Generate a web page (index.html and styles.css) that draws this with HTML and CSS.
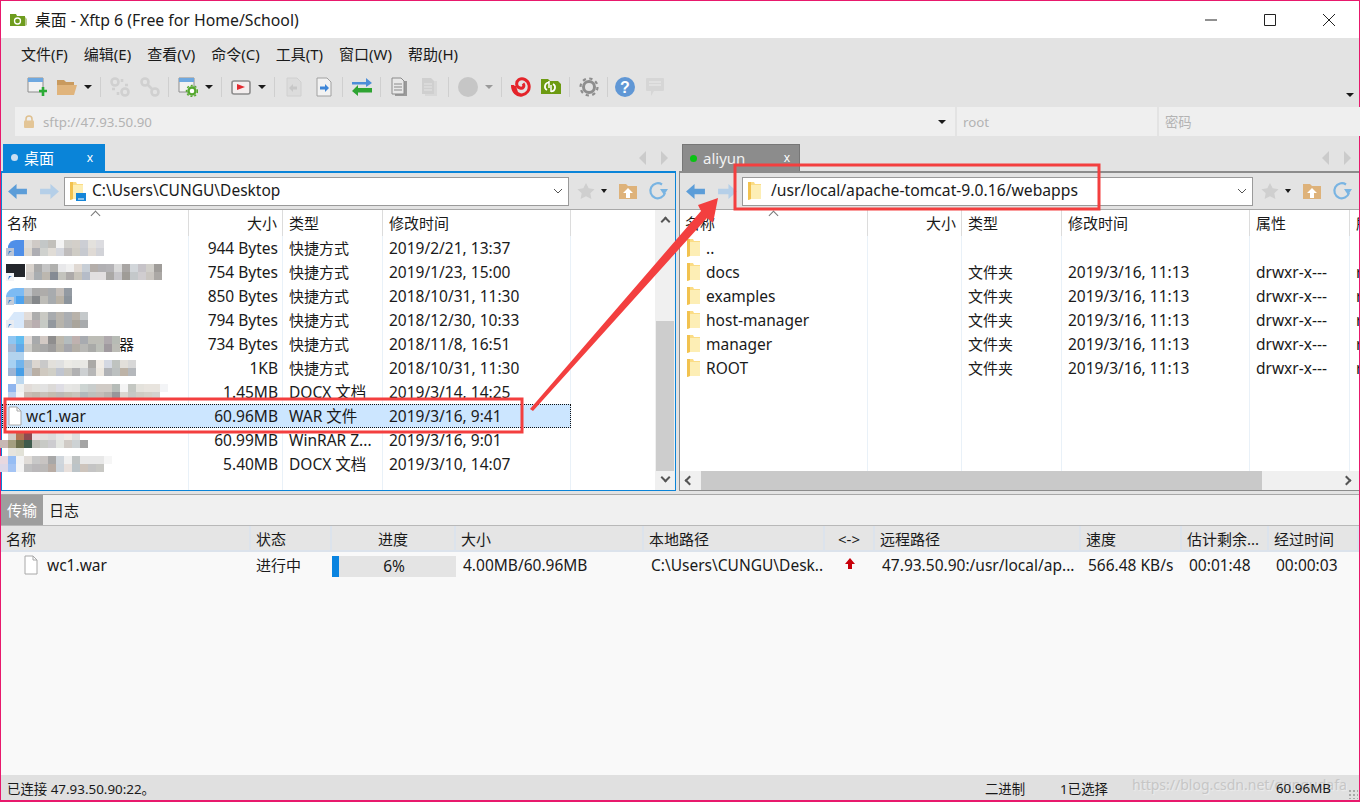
FILE: index.html
```html
<!DOCTYPE html>
<html lang="zh-CN">
<head>
  <meta charset="UTF-8">
  <title>桌面 - Xftp 6 (Free for Home/School)</title>
  <link rel="stylesheet" href="styles.css">
</head>
<body>

  <!-- icones reutilizados -->
  <svg class="defs" width="0" height="0">
    <symbol id="i-folder" viewBox="0 0 13 20">
      <path d="M0 1h6l1 2h6v15H3l-3 1z" fill="#fbdc85"/>
      <path d="M3 4h10v14H3z" fill="#fdeeb5"/>
      <path d="M0 1h3v17l-3 1z" fill="#f2c24f"/>
    </symbol>
    <symbol id="i-back" viewBox="0 0 20 18">
      <path d="M0 9l9-8v5h11v6H9v5z"/>
    </symbol>
    <symbol id="i-fwd" viewBox="0 0 20 18">
      <path d="M20 9l-9-8v5H0v6h11v5z"/>
    </symbol>
    <symbol id="i-star" viewBox="0 0 20 20">
      <path d="M10 1l3 6 6.500 1-4.700 4.500 1.200 6.500-6-3.200L4 19l1.200-6.500L.5 8 7 7z" fill="#cfcfcf"/>
    </symbol>
    <symbol id="i-home" viewBox="0 0 20 20">
      <path d="M1 3h7l2 2h9v13H1z" fill="#deb27a"/>
      <path d="M10 7l5 5h-3v5H8v-5H5z" fill="#fff"/>
    </symbol>
    <symbol id="i-refresh" viewBox="0 0 20 20">
      <path d="M17 12a7.500 7.500 0 1 1-3-8.500" fill="none" stroke="#79b4e2" stroke-width="2.200"/>
      <path d="M12 8h8l-4 6z" fill="#79b4e2"/>
    </symbol>
    <symbol id="i-file" viewBox="0 0 14 20">
      <path d="M1 1h8l4 4v14H1z" fill="#fff" stroke="#a8a8a8"/>
      <path d="M9 1v4h4" fill="none" stroke="#a8a8a8"/>
    </symbol>
    <symbol id="i-doc" viewBox="0 0 20 20">
      <path d="M3 1h10l4 4v14H3z" fill="#dcdcdc" stroke="#d0d0d0"/>
    </symbol>
  </svg>

  <div class="window">

    <header class="titlebar">
      <svg class="app-icon" width="17" height="14" viewBox="0 0 17 14">
        <path d="M0 1h6l1 2h8v10H0z" fill="#6e9c1e"/>
        <path d="M15 4l2 2v6l-2 1z" fill="#b9c98e"/>
        <circle cx="7.500" cy="8" r="3" fill="none" stroke="#fff" stroke-width="1.300"/>
      </svg>
      <span class="title-text">桌面 - Xftp 6 (Free for Home/School)</span>
      <div class="win-buttons">
        <svg width="14" height="14" viewBox="0 0 14 14"><path d="M1 7h12" stroke="#222"/></svg>
        <svg width="14" height="14" viewBox="0 0 14 14"><path d="M1.500 1.500h11v11h-11z" fill="none" stroke="#222"/></svg>
        <svg width="14" height="14" viewBox="0 0 14 14"><path d="M1 1l12 12M13 1L1 13" stroke="#222"/></svg>
      </div>
    </header>

    <nav class="menubar">
      <span>文件(F)</span>
      <span>编辑(E)</span>
      <span>查看(V)</span>
      <span>命令(C)</span>
      <span>工具(T)</span>
      <span>窗口(W)</span>
      <span>帮助(H)</span>
    </nav>

    <div class="toolbar">
      <svg class="tool" viewBox="0 0 20 20">
        <path d="M1 1h15v14H1z" fill="#f2f2f2" stroke="#8d8d8d"/><path d="M1 1h15v4H1z" fill="#6ea8e0"/>
        <path d="M12 14h8M16 10v9" stroke="#2bab35" stroke-width="2.600"/>
      </svg>
      <svg class="tool" viewBox="0 0 20 20">
        <path d="M0 3h7l2 2h8v3H0z" fill="#c99a5e"/><path d="M0 8h20l-3 10H0z" fill="#e0b47c"/>
      </svg>
      <i class="drop"></i>
      <i class="sep"></i>
      <svg class="tool" viewBox="0 0 20 20" fill="none" stroke="#d0d0d0" stroke-width="2.600">
        <circle cx="5" cy="5" r="3.500"/><circle cx="15" cy="15" r="3.500"/><path d="M12 2v3M18 8h-3M2 12h3M8 18v-3"/>
      </svg>
      <svg class="tool" viewBox="0 0 20 20" fill="none" stroke="#d0d0d0" stroke-width="2.600">
        <circle cx="5" cy="5" r="3.500"/><circle cx="15" cy="15" r="3.500"/><path d="M7 7l6 6"/>
      </svg>
      <i class="sep"></i>
      <svg class="tool" viewBox="0 0 20 20">
        <path d="M1 1h15v14H1z" fill="#f2f2f2" stroke="#8d8d8d"/><path d="M1 1h15v4H1z" fill="#6ea8e0"/>
        <circle cx="14" cy="14" r="3.500" fill="#fff" stroke="#55a82e" stroke-width="2.400"/>
        <circle cx="14" cy="14" r="5.500" fill="none" stroke="#55a82e" stroke-width="1.500" stroke-dasharray="2 2"/>
      </svg>
      <i class="drop"></i>
      <i class="sep"></i>
      <svg class="tool" viewBox="0 0 20 20">
        <rect x="1" y="4" width="18" height="13" rx="2" fill="#f3eeee" stroke="#8d8d8d" stroke-width="1.600"/>
        <path d="M6 7l8 3-8 3z" fill="#e2282e"/>
      </svg>
      <i class="drop"></i>
      <i class="sep"></i>
      <svg class="tool" viewBox="0 0 20 20">
        <use href="#i-doc"/><path d="M5 11l4-4v2.500h4v3H9V15z" fill="#c8c8c8"/>
      </svg>
      <svg class="tool" viewBox="0 0 20 20">
        <path d="M3 1h10l4 4v14H3z" fill="#f2f2f2" stroke="#a0a0a0"/><path d="M15 11l-4-4v2.500H6v3h5V15z" fill="#3d85d8"/>
      </svg>
      <i class="sep"></i>
      <svg class="tool" viewBox="0 0 20 20">
        <path d="M0 5h14V1l6 5-6 4V7.500H0z" fill="#4d8ed8"/><path d="M20 11H6V8l-6 6 6 5v-3.500h14z" fill="#2ea432"/>
      </svg>
      <i class="sep"></i>
      <svg class="tool" viewBox="0 0 20 20">
        <path d="M5 4h12v15H5z" fill="#9a9a9a"/><path d="M2 1h9l3 3v13H2z" fill="#e8e8e8" stroke="#8a8a8a"/>
        <path d="M4 7h8M4 10h8M4 13h8" stroke="#8a8a8a"/>
      </svg>
      <svg class="tool" viewBox="0 0 20 20">
        <path d="M5 4h12v15H5z" fill="#d8d8d8"/><path d="M2 1h9l3 3v13H2z" fill="#cfcfcf"/>
        <path d="M4 7h8M4 10h8M4 13h8" stroke="#e4e4e4"/>
      </svg>
      <i class="sep"></i>
      <svg class="tool" viewBox="0 0 20 20"><circle cx="10" cy="10" r="10" fill="#c6c6c6"/></svg>
      <i class="drop drop-gray"></i>
      <i class="sep"></i>
      <svg class="tool" viewBox="0 0 20 20">
        <path d="M1.500 8C1.500 15 6 19 11 18C16 17 19 13 18 8C17 3 12 0.500 8 2.500C4.500 5 5 10 9 11C12 12 14 9 12 6.500" fill="none" stroke="#e4242a" stroke-width="3"/>
        <path d="M0 8l5 1 2 6 4 2-3 2-5-3z" fill="#e4242a"/>
      </svg>
      <svg class="tool" viewBox="0 0 20 20">
        <path d="M0 2h7l2 2h8l3 3v10H0z" fill="#6d9b12"/>
        <path d="M6 13a4 4 0 0 1 2-7.500M12 7a4 4 0 0 1-2 7.500" fill="none" stroke="#fff" stroke-width="1.700"/>
        <path d="M8 4v7M10 8v7" stroke="#fff" stroke-width="1.500"/>
      </svg>
      <i class="sep"></i>
      <svg class="tool" viewBox="0 0 20 20">
        <circle cx="10" cy="10" r="5.500" fill="none" stroke="#8e8e8e" stroke-width="3"/>
        <circle cx="10" cy="10" r="8.500" fill="none" stroke="#8e8e8e" stroke-width="2.200" stroke-dasharray="3.300 3.370"/>
      </svg>
      <i class="sep"></i>
      <svg class="tool tight" viewBox="0 0 20 20">
        <circle cx="10" cy="10" r="10" fill="#6097d5"/>
        <text x="10" y="15.500" class="help-mark">?</text>
      </svg>
      <svg class="tool" viewBox="0 0 20 20">
        <path d="M2 1h16a1 1 0 0 1 1 1v11a1 1 0 0 1-1 1H9l-3 5v-5H2a1 1 0 0 1-1-1V2a1 1 0 0 1 1-1z" fill="#d6d6d6"/>
        <path d="M4 5h12M4 8h12" stroke="#ececec"/>
      </svg>
      <i class="drop toolbar-more"></i>
    </div>

    <div class="addressbar">
      <div class="addr addr-host">
        <svg width="10" height="13" viewBox="0 0 10 13"><path d="M2 6V4a3 3 0 0 1 6 0v2" fill="none" stroke="#dfc08f" stroke-width="1.500"/><rect y="5.500" width="10" height="7.500" rx="1" fill="#e3c596"/></svg>
        <span>sftp://47.93.50.90</span>
        <i class="drop drop-host"></i>
      </div>
      <div class="addr addr-user">root</div>
      <div class="addr addr-pass">密码</div>
    </div>

    <div class="tabrow">
      <div class="tabside tabside-left">
        <div class="tab tab-active"><i class="dot dot-white"></i><b>桌面</b><em>x</em></div>
        <div class="tab-arrows"><i class="tri-l"></i><i class="tri-r"></i></div>
      </div>
      <div class="tabside tabside-right">
        <div class="tab tab-gray"><i class="dot dot-green"></i><span>aliyun</span><em>x</em></div>
        <div class="tab-arrows"><i class="tri-l"></i><i class="tri-r"></i></div>
      </div>
    </div>

    <main class="panes">

      <!-- painel local -->
      <section class="pane pane-local">
        <div class="pathbar">
          <svg class="nav-arrow nav-back"><use href="#i-back"/></svg>
          <svg class="nav-arrow nav-fwd"><use href="#i-fwd"/></svg>
          <div class="pathbox">
            <svg class="path-folder" width="13" height="20"><use href="#i-folder"/></svg>
            <svg class="path-badge" width="10" height="8" viewBox="0 0 10 8"><path d="M0 0h10v8H0z" fill="#1585d8"/><path d="M2 6h6" stroke="#fff"/></svg>
            <span>C:\Users\CUNGU\Desktop</span>
            <svg class="chev" width="10" height="6" viewBox="0 0 10 6"><path d="M1 1l4 4 4-4" fill="none" stroke="#555"/></svg>
          </div>
          <svg class="pt-star" width="18" height="18"><use href="#i-star"/></svg>
          <i class="drop"></i>
          <svg class="pt-home" width="20" height="20"><use href="#i-home"/></svg>
          <svg class="pt-refresh" width="20" height="20"><use href="#i-refresh"/></svg>
        </div>
        <div class="pane-body">
          <div class="listing">
            <div class="row head cols-local">
              <span>名称</span><span class="num">大小</span><span>类型</span><span>修改时间</span>
            </div>
            <i class="sort-caret"></i>
            <div class="rows rows-local">
              <div class="row cols-local"><span></span><span class="num">944 Bytes</span><span class="zh">快捷方式</span><span>2019/2/21, 13:37</span></div>
              <div class="row cols-local"><span></span><span class="num">754 Bytes</span><span class="zh">快捷方式</span><span>2019/1/23, 15:00</span></div>
              <div class="row cols-local"><span></span><span class="num">850 Bytes</span><span class="zh">快捷方式</span><span>2018/10/31, 11:30</span></div>
              <div class="row cols-local"><span></span><span class="num">794 Bytes</span><span class="zh">快捷方式</span><span>2018/12/30, 10:33</span></div>
              <div class="row cols-local"><span class="name-tail">器</span><span class="num">734 Bytes</span><span class="zh">快捷方式</span><span>2018/11/8, 16:51</span></div>
              <div class="row cols-local"><span></span><span class="num">1KB</span><span class="zh">快捷方式</span><span>2018/10/31, 11:30</span></div>
              <div class="row cols-local"><span></span><span class="num">1.45MB</span><span>DOCX 文档</span><span>2019/3/14, 14:25</span></div>
              <div class="row cols-local row-selected"><span class="name"><svg width="14" height="20"><use href="#i-file"/></svg>wc1.war</span><span class="num">60.96MB</span><span>WAR 文件</span><span>2019/3/16, 9:41</span></div>
              <div class="row cols-local"><span></span><span class="num">60.99MB</span><span>WinRAR Z...</span><span>2019/3/16, 9:01</span></div>
              <div class="row cols-local"><span></span><span class="num">5.40MB</span><span>DOCX 文档</span><span>2019/3/10, 14:07</span></div>
            </div>
          </div>
          <div class="vscroll">
            <i class="arrow-up"></i>
            <div class="vtrack"><div class="vthumb"></div></div>
            <i class="arrow-down"></i>
          </div>
        </div>
      </section>

      <!-- painel remoto -->
      <section class="pane pane-remote">
        <div class="pathbar">
          <svg class="nav-arrow nav-back"><use href="#i-back"/></svg>
          <svg class="nav-arrow nav-fwd"><use href="#i-fwd"/></svg>
          <div class="pathbox">
            <svg class="path-folder" width="13" height="20"><use href="#i-folder"/></svg>
            <span>/usr/local/apache-tomcat-9.0.16/webapps</span>
            <svg class="chev" width="10" height="6" viewBox="0 0 10 6"><path d="M1 1l4 4 4-4" fill="none" stroke="#555"/></svg>
          </div>
          <svg class="pt-star" width="18" height="18"><use href="#i-star"/></svg>
          <i class="drop"></i>
          <svg class="pt-home" width="20" height="20"><use href="#i-home"/></svg>
          <svg class="pt-refresh" width="20" height="20"><use href="#i-refresh"/></svg>
        </div>
        <div class="listing listing-remote">
          <div class="row head cols-remote">
            <span>名称</span><span class="num">大小</span><span>类型</span><span>修改时间</span><span>属性</span><span>所有者</span>
          </div>
          <i class="sort-caret"></i>
          <div class="rows rows-remote">
            <div class="row cols-remote"><span class="name"><svg width="13" height="20"><use href="#i-folder"/></svg>..</span><span></span><span></span><span></span><span></span><span></span></div>
            <div class="row cols-remote"><span class="name"><svg width="13" height="20"><use href="#i-folder"/></svg>docs</span><span></span><span class="zh">文件夹</span><span>2019/3/16, 11:13</span><span>drwxr-x---</span><span>root</span></div>
            <div class="row cols-remote"><span class="name"><svg width="13" height="20"><use href="#i-folder"/></svg>examples</span><span></span><span class="zh">文件夹</span><span>2019/3/16, 11:13</span><span>drwxr-x---</span><span>root</span></div>
            <div class="row cols-remote"><span class="name"><svg width="13" height="20"><use href="#i-folder"/></svg>host-manager</span><span></span><span class="zh">文件夹</span><span>2019/3/16, 11:13</span><span>drwxr-x---</span><span>root</span></div>
            <div class="row cols-remote"><span class="name"><svg width="13" height="20"><use href="#i-folder"/></svg>manager</span><span></span><span class="zh">文件夹</span><span>2019/3/16, 11:13</span><span>drwxr-x---</span><span>root</span></div>
            <div class="row cols-remote"><span class="name"><svg width="13" height="20"><use href="#i-folder"/></svg>ROOT</span><span></span><span class="zh">文件夹</span><span>2019/3/16, 11:13</span><span>drwxr-x---</span><span>root</span></div>
          </div>
        </div>
        <div class="hscroll">
          <i class="arrow-left"></i>
          <div class="htrack"><div class="hthumb"></div></div>
          <i class="arrow-right"></i>
        </div>
      </section>
    </main>

    <section class="transfers">
      <div class="transfer-tabs">
        <span class="ttab ttab-active">传输</span>
        <span class="ttab">日志</span>
      </div>
      <div class="tgrid thead">
        <span>名称</span><span>状态</span><span class="center">进度</span><span>大小</span><span>本地路径</span><span class="center">&lt;-&gt;</span><span>远程路径</span><span>速度</span><span>估计剩余...</span><span>经过时间</span>
      </div>
      <div class="tbody">
        <div class="tgrid trow">
          <span class="tname"><svg width="14" height="20"><use href="#i-file"/></svg>wc1.war</span>
          <span class="zh">进行中</span>
          <span class="progress"><i class="progress-fill"></i><b>6%</b></span>
          <span>4.00MB/60.96MB</span>
          <span>C:\Users\CUNGU\Desk..</span>
          <span class="center"><svg class="up-mark" width="12" height="12" viewBox="0 0 12 12"><path d="M6 0l5 6H8v5H4V6H1z" fill="#c8000a"/></svg></span>
          <span>47.93.50.90:/usr/local/ap...</span>
          <span>566.48 KB/s</span>
          <span>00:01:48</span>
          <span>00:00:03</span>
        </div>
      </div>
    </section>

    <footer class="statusbar">
      <span class="st-conn">已连接 47.93.50.90:22。</span>
      <span class="st-mode">二进制</span>
      <span class="st-sel">1已选择</span>
      <span class="st-size">60.96MB</span>
      <span class="grip"></span>
    </footer>
  </div>

  <!-- mosaico dos nomes e marcacoes vermelhas, por cima da janela -->
  <svg class="overlay" width="1360" height="802" viewBox="0 0 1360 802">
    <g class="mosaic">
      <!-- linha 1 -->
      <path d="M8 246q2-6 8-6h8v16H8z" fill="#4f8fe8"/>
      <rect x="6" y="248" fill="#b9c4d6"/><path d="M8 255l1-4h3l-2 1z" fill="#2f78c8"/>
      <rect x="24" y="240" fill="#dedcd9"/><rect x="32" y="240" fill="#cfcac6"/><rect x="40" y="240" fill="#c3c7c7"/><rect x="48" y="240" fill="#c2c0bb"/><rect x="56" y="240" fill="#f3f3f3"/><rect x="64" y="240" fill="#d0cfcb"/><rect x="72" y="240" fill="#d3cfc9"/><rect x="80" y="240" fill="#ccced4"/><rect x="88" y="240" fill="#e3e1dd"/><rect x="96" y="240" fill="#dcdce0"/>
      <rect x="24" y="248" fill="#dcd7cf"/><rect x="32" y="248" fill="#aeaeb3"/><rect x="40" y="248" fill="#cfd1ce"/><rect x="48" y="248" fill="#e0dcd6"/><rect x="56" y="248" fill="#d5d7dd"/><rect x="64" y="248" fill="#bfbcbc"/><rect x="72" y="248" fill="#cfccc5"/><rect x="80" y="248" fill="#c7cad0"/><rect x="88" y="248" fill="#dfdad5"/><rect x="96" y="248" fill="#d2d3d8"/>
      <!-- linha 2 -->
      <path d="M6 264h19v13H6z" fill="#23262b"/>
      <rect x="6" y="273" fill="#f2f4f8"/><path d="M8 280l1-4h3l-2 1z" fill="#2f78c8"/>
      <rect x="26" y="264" fill="#d8d2cc"/><rect x="34" y="264" fill="#a9a9a9"/><rect x="42" y="264" fill="#c4c4c4"/><rect x="50" y="264" fill="#b0b0ae"/><rect x="58" y="264" fill="#e8e8ea"/><rect x="66" y="264" fill="#f0f0f0"/><rect x="74" y="264" fill="#e0d9d3"/><rect x="82" y="264" fill="#c7ced6"/><rect x="90" y="264" fill="#b4aeaa"/><rect x="98" y="264" fill="#b1b0b3"/><rect x="106" y="264" fill="#b4b3b6"/><rect x="114" y="264" fill="#d9d9d9"/><rect x="122" y="264" fill="#a9a6a4"/><rect x="130" y="264" fill="#d2d6da"/><rect x="138" y="264" fill="#c6c3c8"/><rect x="146" y="264" fill="#d1cfca"/><rect x="154" y="264" fill="#9f9c99"/>
      <rect x="26" y="272" fill="#cfcac6"/><rect x="34" y="272" fill="#a9adb0"/><rect x="42" y="272" fill="#bcb7af"/><rect x="50" y="272" fill="#858b94"/><rect x="58" y="272" fill="#c3c3bd"/><rect x="66" y="272" fill="#adaaa9"/><rect x="74" y="272" fill="#c8c4bb"/><rect x="82" y="272" fill="#b5bcc8"/><rect x="90" y="272" fill="#e1dfe0"/><rect x="98" y="272" fill="#e2dfe0"/><rect x="106" y="272" fill="#aaa8a6"/><rect x="114" y="272" fill="#c6c5c9"/><rect x="122" y="272" fill="#9f9c97"/><rect x="130" y="272" fill="#c4c8ca"/><rect x="138" y="272" fill="#d0cdd0"/><rect x="146" y="272" fill="#cac6c1"/><rect x="154" y="272" fill="#aba8a5"/>
      <!-- linha 3 -->
      <path d="M6 296q2-8 10-8h8v16H6z" fill="#7dbbf3"/>
      <rect x="16" y="296" fill="#4ea3ee"/><rect x="6" y="297" fill="#c4ccd8"/><path d="M8 304l1-4h3l-2 1z" fill="#2f78c8"/>
      <rect x="24" y="288" fill="#c3c6c9"/><rect x="32" y="288" fill="#a9a9a9"/><rect x="40" y="288" fill="#aeacaa"/><rect x="48" y="288" fill="#a8abae"/><rect x="56" y="288" fill="#c3bdb8"/><rect x="64" y="288" fill="#939aa2"/>
      <rect x="24" y="296" fill="#a8aaa9"/><rect x="32" y="296" fill="#85888b"/><rect x="40" y="296" fill="#bdbcb7"/><rect x="48" y="296" fill="#a7abae"/><rect x="56" y="296" fill="#b9b2a6"/><rect x="64" y="296" fill="#8c949c"/>
      <!-- linha 4 -->
      <path d="M14 312l-6 8v8h16v-16z" fill="#d8e8fa"/><rect x="6" y="320" fill="#e8ecf2"/><path d="M8 328l1-4h3l-2 1z" fill="#2f78c8"/>
      <rect x="24" y="312" fill="#e2dcd8"/><rect x="32" y="312" fill="#adadad"/><rect x="40" y="312" fill="#c9c9c3"/><rect x="48" y="312" fill="#a8abae"/><rect x="56" y="312" fill="#b9b5ae"/><rect x="64" y="312" fill="#abaeb2"/><rect x="72" y="312" fill="#b8b2aa"/><rect x="80" y="312" fill="#c5c9cb"/>
      <rect x="24" y="320" fill="#c4bcb8"/><rect x="32" y="320" fill="#b9aeb0"/><rect x="40" y="320" fill="#c6cac5"/><rect x="48" y="320" fill="#93989e"/><rect x="56" y="320" fill="#b7b4ac"/><rect x="64" y="320" fill="#a9acaf"/><rect x="72" y="320" fill="#aaa59c"/><rect x="80" y="320" fill="#a8abad"/>
      <!-- linha 5 -->
      <rect x="8" y="336" fill="#8fc6f2"/><rect x="16" y="336" fill="#62bcf0"/><rect x="24" y="336" fill="#e0dad8"/><rect x="32" y="336" fill="#a8aaac"/><rect x="40" y="336" fill="#d2c9c4"/><rect x="48" y="336" fill="#8f8e8e"/><rect x="56" y="336" fill="#bdb8ad"/><rect x="64" y="336" fill="#b4bcbe"/><rect x="72" y="336" fill="#bfb1af"/><rect x="80" y="336" fill="#a8abb0"/><rect x="88" y="336" fill="#bdbdb6"/><rect x="96" y="336" fill="#bdbdb6"/><rect x="104" y="336" fill="#afa9ad"/><rect x="112" y="336" fill="#b7bbb5"/>
      <rect x="8" y="344" fill="#a3b7d3"/><rect x="16" y="344" fill="#62a9e8"/><rect x="24" y="344" fill="#ccccc8"/><rect x="32" y="344" fill="#adadaa"/><rect x="40" y="344" fill="#a8a8a8"/><rect x="48" y="344" fill="#9d9c9c"/><rect x="56" y="344" fill="#b6b2a8"/><rect x="64" y="344" fill="#a5a6ac"/><rect x="72" y="344" fill="#b3aea6"/><rect x="80" y="344" fill="#b8b8b5"/><rect x="88" y="344" fill="#a9aaa8"/><rect x="96" y="344" fill="#bcbfb8"/><rect x="104" y="344" fill="#a09a9f"/><rect x="112" y="344" fill="#bcbcb6"/>
      <rect x="8" y="352" fill="#b3d3ee"/><rect x="16" y="352" fill="#b3d3ee"/>
      <!-- linha 6 -->
      <rect x="8" y="360" fill="#a7d1f2"/><rect x="16" y="360" fill="#72b4ec"/><rect x="24" y="360" fill="#b7c0c9"/><rect x="32" y="360" fill="#dcd6d0"/><rect x="40" y="360" fill="#c9c9c9"/><rect x="48" y="360" fill="#e2e0db"/><rect x="56" y="360" fill="#dfe0e0"/><rect x="64" y="360" fill="#ecebe6"/><rect x="72" y="360" fill="#e8e8e4"/><rect x="80" y="360" fill="#e8e8e4"/><rect x="88" y="360" fill="#aba9a6"/><rect x="96" y="360" fill="#f1ece6"/><rect x="104" y="360" fill="#d4d8e2"/><rect x="112" y="360" fill="#bfc3c0"/><rect x="120" y="360" fill="#e2dfda"/><rect x="128" y="360" fill="#d8d8d8"/>
      <rect x="8" y="368" fill="#9cb4d4"/><rect x="16" y="368" fill="#479ee6"/><rect x="24" y="368" fill="#bfc6d0"/><rect x="32" y="368" fill="#bab0a6"/><rect x="40" y="368" fill="#cfc9c0"/><rect x="48" y="368" fill="#d0cfc7"/><rect x="56" y="368" fill="#c0c5d0"/><rect x="64" y="368" fill="#c8c6c0"/><rect x="72" y="368" fill="#b1b1b2"/><rect x="80" y="368" fill="#cdd0d2"/><rect x="88" y="368" fill="#b7b7b7"/><rect x="96" y="368" fill="#ede8e0"/><rect x="104" y="368" fill="#b0b2b6"/><rect x="112" y="368" fill="#bcc0c0"/><rect x="120" y="368" fill="#bdb3a7"/><rect x="128" y="368" fill="#b5b8bc"/>
      <rect x="16" y="376" fill="#bdd8ef"/>
      <!-- linha 7 -->
      <rect x="8" y="384" fill="#8fb5ee"/><rect x="16" y="384" fill="#eef0f0"/><rect x="24" y="384" fill="#e2dcd8"/><rect x="32" y="384" fill="#e3e2de"/><rect x="40" y="384" fill="#e2e2e2"/><rect x="48" y="384" fill="#dcdad8"/><rect x="56" y="384" fill="#dedde4"/><rect x="64" y="384" fill="#e6e6e4"/><rect x="72" y="384" fill="#e4e4e2"/><rect x="80" y="384" fill="#cdd4d2"/><rect x="88" y="384" fill="#c9cdcc"/><rect x="96" y="384" fill="#d0cbc6"/><rect x="104" y="384" fill="#d0cbc6"/><rect x="112" y="384" fill="#b6bcb8"/><rect x="120" y="384" fill="#f4f4f4"/><rect x="128" y="384" fill="#c4c7c2"/><rect x="136" y="384" fill="#e4e2dc"/><rect x="144" y="384" fill="#e8e4de"/><rect x="152" y="384" fill="#e8e4de"/><rect x="160" y="384" fill="#f3f4f6"/>
      <rect x="8" y="392" fill="#bcd0ee"/><rect x="16" y="392" fill="#f4f4f4"/><rect x="24" y="392" fill="#c9bcb4"/><rect x="32" y="392" fill="#c2b8ae"/><rect x="40" y="392" fill="#c9c2bb"/><rect x="48" y="392" fill="#c4bcb0"/><rect x="56" y="392" fill="#bdbab6"/><rect x="64" y="392" fill="#c4c0b4"/><rect x="72" y="392" fill="#c9c4bc"/><rect x="80" y="392" fill="#b2b9bc"/><rect x="88" y="392" fill="#bdbfbc"/><rect x="96" y="392" fill="#c4bdb8"/><rect x="104" y="392" fill="#b8b4b0"/><rect x="112" y="392" fill="#98969a"/><rect x="120" y="392" fill="#dbd6d0"/><rect x="128" y="392" fill="#c7c8c4"/><rect x="136" y="392" fill="#d0ccc4"/><rect x="144" y="392" fill="#d4d0c8"/><rect x="152" y="392" fill="#d4d2ce"/>
      <!-- linha 9 -->
      <rect x="8" y="433" class="short" fill="#d2ccc8"/><rect x="16" y="433" fill="#b47452" class="short"/><rect x="24" y="433" fill="#8e4a50" class="short"/><rect x="32" y="433" fill="#ece0e2" class="short"/><rect x="40" y="433" fill="#e2e0de" class="short"/><rect x="48" y="433" fill="#dcdcdc" class="short"/><rect x="56" y="433" fill="#e8e8e8" class="short"/><rect x="64" y="433" fill="#f0ece8" class="short"/><rect x="72" y="433" fill="#e0e0e0" class="short"/>
      <rect x="0" y="440" fill="#c8b8b4"/><rect x="8" y="440" fill="#a49e80"/><rect x="16" y="440" fill="#6c6e4c"/><rect x="24" y="440" fill="#3f5a4c"/><rect x="32" y="440" fill="#c0bfb8"/><rect x="40" y="440" fill="#c8cac6"/><rect x="48" y="440" fill="#cdccd0"/><rect x="56" y="440" fill="#e4e6e2"/><rect x="64" y="440" fill="#d0cbc6"/><rect x="72" y="440" fill="#cdd2d4"/><rect x="80" y="440" fill="#a4a4a4"/>
      <rect x="8" y="448" fill="#e6e4de"/><rect x="16" y="448" fill="#e2e2d8"/>
      <!-- linha 10 -->
      <rect x="0" y="456" fill="#e8d8e0"/><rect x="8" y="456" fill="#96bdf4"/><rect x="16" y="456" fill="#f2f2f2"/><rect x="24" y="456" fill="#e0dcd8"/><rect x="32" y="456" fill="#c8c8c8"/><rect x="40" y="456" fill="#c8c4c2"/><rect x="48" y="456" fill="#a8a8a8"/><rect x="56" y="456" fill="#d0d6dc"/><rect x="64" y="456" fill="#f0f0f0"/><rect x="72" y="456" fill="#c0c4c4"/><rect x="80" y="456" fill="#e8e8e8"/><rect x="88" y="456" fill="#e8e8e8"/><rect x="96" y="456" fill="#e8e8e8"/><rect x="104" y="456" fill="#f6f6f6"/>
      <rect x="0" y="464" fill="#dcd8e8"/><rect x="8" y="464" fill="#a4c4f4"/><rect x="16" y="464" fill="#f4f4f4"/><rect x="24" y="464" fill="#bfbfc0"/><rect x="32" y="464" fill="#bab8ba"/><rect x="40" y="464" fill="#bbb9b8"/><rect x="48" y="464" fill="#b8aca4"/><rect x="56" y="464" fill="#ccd4dc"/><rect x="64" y="464" fill="#e8e0dc"/><rect x="72" y="464" fill="#bcc4c8"/><rect x="80" y="464" fill="#cdc4bc"/><rect x="88" y="464" fill="#c4c4c4"/><rect x="96" y="464" fill="#c8c8c4"/>
    </g>
    <rect class="mark" x="5" y="399" width="517" height="33"/>
    <rect class="mark" x="735" y="165" width="364" height="44"/>
    <path class="arrow" d="M530 409L701 211l-3-6 20-7-5 25-6-5L533 411z"/>
  </svg>

</body>
</html>
```

FILE: styles.css
```css
* {
  box-sizing: border-box;
}
body {
  margin: 0;
  font-family: "Noto Sans", "Noto Sans CJK SC", sans-serif;
  font-size: 15.500px;
  color: #1a1a1a;
  position: relative;
  width: 1360px;
  height: 802px;
  overflow: hidden;
}
i, em {
  font-style: normal;
  display: block;
}
.defs {
  position: absolute;
}
.zh {
  font-size: 15px;
}
.window {
  width: 1360px;
  height: 802px;
  display: flex;
  flex-direction: column;
  border: 1px solid #e8196c;
  border-bottom-width: 2px;
  background: #e3e3e3;
}

/* ========== barra de titulo ========== */
.titlebar {
  height: 37px;
  flex: none;
  display: flex;
  align-items: center;
  padding-left: 9px;
  background: #fff;
  font-size: 15.800px;
}
.app-icon {
  margin-right: 8px;
}
.win-buttons {
  margin-left: auto;
  display: flex;
  gap: 45px;
  padding-right: 23px;
}

/* ========== menu e ferramentas ========== */
.menubar {
  height: 32px;
  flex: none;
  display: flex;
  align-items: center;
  gap: 16px;
  padding-left: 20px;
  padding-bottom: 2px;
  font-size: 15px;
}
.toolbar {
  height: 37px;
  flex: none;
  display: flex;
  align-items: center;
  gap: 10px;
  padding-left: 26px;
  padding-bottom: 3px;
  position: relative;
}
.tool {
  width: 20px;
  height: 20px;
  flex: none;
}
.tool.tight {
  margin-left: -2px;
}
.help-mark {
  font-family: "Liberation Sans", sans-serif;
  font-size: 16px;
  font-weight: bold;
  fill: #fff;
  text-anchor: middle;
}
.drop {
  width: 0;
  height: 0;
  flex: none;
  margin-left: -3px;
  border-left: 4px solid transparent;
  border-right: 4px solid transparent;
  border-top: 4px solid #1a1a1a;
}
.drop-gray {
  border-top-color: #9a9a9a;
}
.toolbar-more {
  position: absolute;
  right: 5px;
  bottom: 10px;
}
.sep {
  width: 1px;
  height: 20px;
  flex: none;
  margin: 0 -1px 0 -2px;
  background: #cfcfcf;
}

/* ========== barra de endereco ========== */
.addressbar {
  height: 29px;
  flex: none;
  display: flex;
  gap: 2px;
  margin-left: 14px;
  margin-right: -1px;
  font-size: 13.300px;
  color: #b3b3b3;
}
.addr {
  background: #efefef;
  display: flex;
  align-items: center;
  padding-left: 6px;
}
.addr-host {
  width: 940px;
  gap: 9px;
  padding-left: 9px;
}
.drop-host {
  margin-left: auto;
  margin-right: 9px;
}
.addr-user {
  width: 200px;
}
.addr-pass {
  flex: 1;
}

/* ========== abas ========== */
.tabrow {
  height: 35px;
  flex: none;
  display: flex;
  align-items: flex-end;
}
.tabside {
  display: flex;
  align-items: flex-end;
  position: relative;
}
.tabside-left {
  width: 678px;
  padding-left: 2px;
}
.tabside-right {
  flex: 1;
  padding-left: 3px;
}
.tab {
  height: 27px;
  display: flex;
  align-items: center;
}
.tab-active {
  width: 102px;
  background: #0a84d8;
  color: #fff;
  padding-left: 8px;
}
.tab-active b {
  font-weight: normal;
  font-size: 15px;
  margin-left: 6px;
}
.tab-gray {
  width: 118px;
  background: #8c8c8c;
  border: 1px solid #777;
  border-bottom: 0;
  color: #fff;
  padding-left: 7px;
}
.tab-gray span {
  margin-left: 6px;
  font-size: 15px;
  color: #f2f2f2;
}
.tab em {
  margin-left: auto;
  margin-right: 12px;
  font-size: 12px;
  line-height: 12px;
}
.tab-gray em {
  margin-right: 9px;
}
.dot {
  width: 7px;
  height: 7px;
  border-radius: 50%;
}
.dot-white {
  background: #c9def2;
}
.dot-green {
  background: #09c214;
}
.tab-arrows {
  position: absolute;
  right: 11px;
  bottom: 6px;
  display: flex;
  gap: 15px;
}
.tabside-right .tab-arrows {
  right: 8px;
}
.tri-l, .tri-r {
  width: 0;
  height: 0;
  border-top: 7px solid transparent;
  border-bottom: 7px solid transparent;
}
.tri-l {
  border-right: 7px solid #cbcbcb;
}
.tri-r {
  border-left: 7px solid #cbcbcb;
}

/* ========== paineis ========== */
.panes {
  height: 320px;
  flex: none;
  display: flex;
  gap: 3px;
}
.pane {
  background: #fff;
  display: flex;
  flex-direction: column;
}
.pane-local {
  width: 675px;
  flex: none;
  border: 1px solid #0a84d8;
  border-top-width: 2px;
}
.pane-remote {
  flex: 1;
  min-width: 0;
  border: 1px solid #8c8c8c;
  border-top-width: 2px;
  border-right: 0;
}
.pathbar {
  height: 37px;
  flex: none;
  display: flex;
  align-items: center;
  background: #e3e3e3;
  border-bottom: 1px solid #a8a8a8;
  padding-left: 6px;
}
.nav-arrow {
  width: 19px;
  height: 17px;
  flex: none;
}
.nav-back {
  fill: #5c9dd8;
  margin-right: 13px;
}
.nav-fwd {
  fill: #b5cfe8;
  margin-right: 5px;
}
.pathbox {
  width: 505px;
  height: 29px;
  flex: none;
  background: #fff;
  border: 1px solid #9a9a9a;
  display: flex;
  align-items: center;
  padding-left: 5px;
  position: relative;
}
.pathbox span {
  margin-left: 9px;
  margin-top: -2px;
}
.pane-remote .pathbox {
  width: 511px;
}
.pane-remote .pathbox span {
  margin-left: 10px;
  font-size: 15.700px;
}
.path-badge {
  position: absolute;
  left: 11px;
  bottom: 4px;
}
.chev {
  margin-left: auto;
  margin-right: 5px;
}
.pt-star {
  margin-left: 8px;
  margin-right: 6px;
}
.pathbar .drop {
  margin-left: 0;
  margin-right: 11px;
  border-left-width: 3.500px;
  border-right-width: 3.500px;
}
.pt-home {
  margin-right: 10px;
}
.pane-body {
  flex: 1;
  display: flex;
  min-height: 0;
}
.listing {
  flex: 1;
  position: relative;
  overflow: hidden;
}
.row {
  display: grid;
  height: 24px;
  align-items: center;
  white-space: nowrap;
}
.row > span {
  padding-left: 6px;
  line-height: 22px;
  overflow: hidden;
}
.row > .num {
  padding-left: 0;
  padding-right: 5px;
  text-align: right;
}
.cols-local {
  grid-template-columns: 187px 94px 100px 188px;
  width: 569px;
}
.cols-remote {
  grid-template-columns: 188px 94px 100px 188px 100px 60px;
  width: 730px;
}
.head {
  height: 26px;
  font-size: 15px;
}
.head > span {
  height: 26px;
  line-height: 27px;
  border-right: 1px solid #dcdcdc;
}
.head > span:first-child {
  padding-left: 5px;
}
.sort-caret {
  position: absolute;
  left: 90px;
  top: 2px;
  width: 7px;
  height: 7px;
  border-left: 1px solid #777;
  border-top: 1px solid #777;
  transform: rotate(45deg);
}
.rows-local, .rows-remote {
  background-repeat: no-repeat;
  background-size: 1px 100%;
  height: 260px;
}
.rows-local {
  background-image: linear-gradient(#e9f1f8, #e9f1f8), linear-gradient(#e9f1f8, #e9f1f8), linear-gradient(#e9f1f8, #e9f1f8), linear-gradient(#e9f1f8, #e9f1f8);
  background-position: 186px 0, 280px 0, 380px 0, 568px 0;
}
.rows-remote {
  height: 235px;
  background-image: linear-gradient(#e9f1f8, #e9f1f8), linear-gradient(#e9f1f8, #e9f1f8), linear-gradient(#e9f1f8, #e9f1f8), linear-gradient(#e9f1f8, #e9f1f8), linear-gradient(#e9f1f8, #e9f1f8);
  background-position: 187px 0, 281px 0, 381px 0, 569px 0, 669px 0;
}
.name {
  display: flex;
  align-items: center;
  gap: 6px;
}
.row > .name {
  padding-left: 7px;
  overflow: visible;
}
.row-selected {
  background: #cce6ff;
  outline: 1px dotted #111;
  outline-offset: -1px;
}
.row-selected > .name {
  padding-left: 6px;
  gap: 4px;
}
.row > .name-tail {
  text-align: right;
  padding-right: 55px;
  font-size: 15px;
}
.vscroll {
  width: 20px;
  flex: none;
  display: flex;
  flex-direction: column;
  align-items: center;
  background: #f0f0f0;
}
.vtrack {
  flex: 1;
  width: 18px;
  padding-top: 92px;
}
.vthumb {
  height: 150px;
  background: #cdcdcd;
}
.arrow-up, .arrow-down, .arrow-left, .arrow-right {
  width: 7px;
  height: 7px;
  flex: none;
  border-left: 2px solid #555;
  border-top: 2px solid #555;
}
.arrow-up {
  transform: rotate(45deg);
  margin: 8px 0 4px;
}
.arrow-down {
  transform: rotate(225deg);
  margin: 2px 0 9px;
}
.arrow-left {
  transform: rotate(-45deg);
  margin: 0 8px 0 6px;
}
.arrow-right {
  transform: rotate(135deg);
  margin: 0 9px 0 3px;
}
.hscroll {
  height: 19px;
  flex: none;
  display: flex;
  align-items: center;
  background: #f0f0f0;
}
.htrack {
  flex: 1;
  height: 19px;
}
.hthumb {
  width: 561px;
  height: 19px;
  background: #c9c9c9;
}

/* ========== transferencias ========== */
.transfers {
  flex: 1;
  display: flex;
  flex-direction: column;
  margin-top: 3px;
  border-top: 1px solid #a8a8a8;
  min-height: 0;
}
.transfer-tabs {
  height: 31px;
  flex: none;
  display: flex;
  background: #f0f0f0;
  border-bottom: 1px solid #b8b8b8;
  font-size: 15px;
}
.ttab {
  width: 42px;
  text-align: center;
  line-height: 31px;
}
.ttab-active {
  background: #9e9e9e;
  color: #fff;
}
.tgrid {
  display: grid;
  grid-template-columns: 250px 81px 124px 188px 181px 50px 206px 101px 87px 90px;
  align-items: center;
  white-space: nowrap;
}
.tgrid > span {
  padding-left: 5px;
  overflow: hidden;
}
.thead {
  height: 26px;
  flex: none;
  background: #e5e5e5;
  border-bottom: 2px solid #dce3ec;
  font-size: 15px;
}
.thead > span {
  height: 24px;
  line-height: 27px;
  border-right: 2px solid #dce3ec;
}
.tgrid > .center {
  text-align: center;
  padding-left: 0;
}
.tbody {
  flex: 1;
  background: #f9f9f9;
}
.trow {
  height: 26px;
}
.trow > span {
  line-height: 22px;
}
.trow > span:nth-child(n+4) {
  padding-left: 7px;
}
.trow > span.center {
  padding-left: 0;
  line-height: 0;
}
.up-mark {
  margin-bottom: 3px;
}
.tgrid > .tname {
  display: flex;
  align-items: center;
  gap: 9px;
  padding-left: 23px;
}
.tgrid > .progress {
  height: 21px;
  padding-left: 0;
  background: #e4e4e4;
  display: flex;
  align-items: center;
  justify-content: center;
  position: relative;
  margin-top: 2px;
}
.progress b {
  font-weight: normal;
}
.progress-fill {
  position: absolute;
  left: 0;
  top: 0;
  bottom: 0;
  width: 7px;
  background: #0a84e0;
}

/* ========== barra de status ========== */
.statusbar {
  height: 25px;
  flex: none;
  background: #e0e0e0;
  display: flex;
  align-items: center;
  font-size: 13.400px;
  padding-left: 6px;
  position: relative;
}
.statusbar::after {
  content: "https://blog.csdn.net/qunqudafa";
  position: absolute;
  left: 1131px;
  top: 0;
  font-size: 14px;
  color: #c6c6c6;
  text-shadow: 1px 1px 1px #eee;
}
.statusbar span {
  position: relative;
  z-index: 1;
}
.st-mode {
  margin-left: auto;
}
.st-sel {
  margin-left: 35px;
}
.st-size {
  margin-left: 168px;
  margin-right: 28px;
}
.statusbar .grip {
  position: absolute;
  right: 1px;
  bottom: 1px;
  width: 10px;
  height: 10px;
  background: radial-gradient(circle, #a8a8a8 1px, transparent 1.500px) 0 0/4px 4px;
}

/* ========== marcacoes ========== */
.overlay {
  position: absolute;
  left: 0;
  top: 0;
  pointer-events: none;
}
.mosaic rect {
  width: 8px;
  height: 8px;
}
.mosaic rect.short {
  height: 7px;
}
.mark {
  fill: none;
  stroke: #f33f3f;
  stroke-width: 3;
}
.arrow {
  fill: #f33f3f;
}
```
